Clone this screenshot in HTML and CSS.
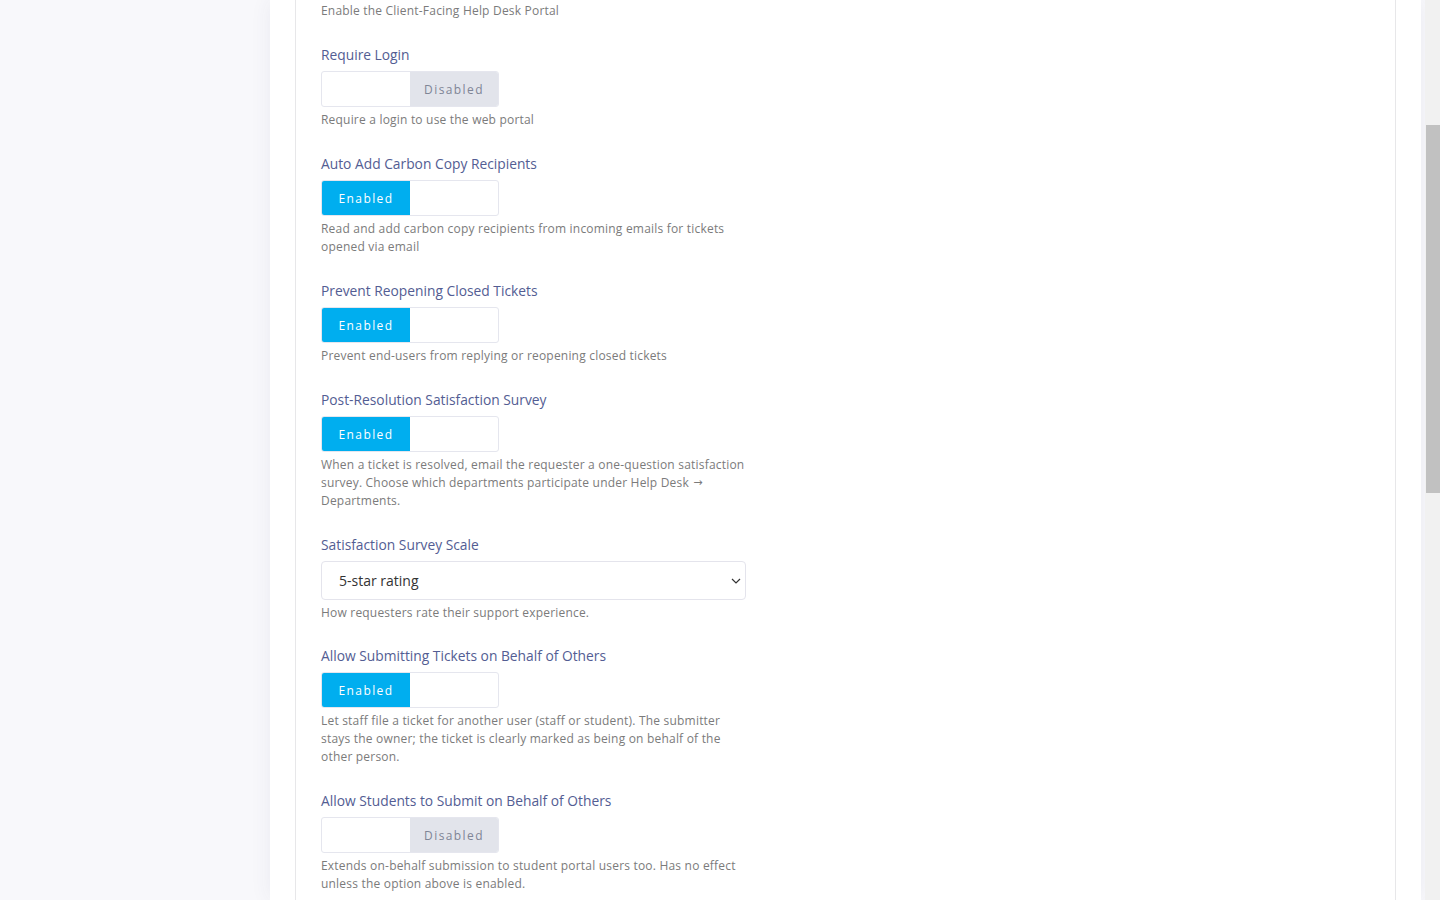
FILE: index.html
```html
<!DOCTYPE html>
<html lang="en">
<head>
<meta charset="utf-8">
<title>Help Desk Settings</title>
<link rel="stylesheet" href="styles.css">
</head>
<body>
<div class="page">
  <div class="card">
    <div class="panel">
      <div class="field">
        <div class="desc first">Enable the Client-Facing Help Desk Portal</div>
      </div>
      <div class="field">
        <div class="label">Require Login</div>
        <div class="toggle"><span class="seg"></span><span class="seg off">Disabled</span></div>
        <div class="desc">Require a login to use the web portal</div>
      </div>
      <div class="field">
        <div class="label">Auto Add Carbon Copy Recipients</div>
        <div class="toggle"><span class="seg on">Enabled</span><span class="seg"></span></div>
        <div class="desc">Read and add carbon copy recipients from incoming emails for tickets opened via email</div>
      </div>
      <div class="field">
        <div class="label">Prevent Reopening Closed Tickets</div>
        <div class="toggle"><span class="seg on">Enabled</span><span class="seg"></span></div>
        <div class="desc">Prevent end-users from replying or reopening closed tickets</div>
      </div>
      <div class="field">
        <div class="label">Post-Resolution Satisfaction Survey</div>
        <div class="toggle"><span class="seg on">Enabled</span><span class="seg"></span></div>
        <div class="desc">When a ticket is resolved, email the requester a one-question satisfaction survey. Choose which departments participate under Help Desk <span class="arrow">→</span> Departments.</div>
      </div>
      <div class="field field-select">
        <div class="label">Satisfaction Survey Scale</div>
        <div class="select-wrap">
          <select class="select">
            <option>5-star rating</option>
            <option>Thumbs up / down</option>
          </select>
          <svg class="chev" width="10" height="6" viewBox="0 0 10 6"><path d="M1 1l4 4 4-4" fill="none" stroke="#333" stroke-width="1.2"/></svg>
        </div>
        <div class="desc">How requesters rate their support experience.</div>
      </div>
      <div class="field">
        <div class="label">Allow Submitting Tickets on Behalf of Others</div>
        <div class="toggle"><span class="seg on">Enabled</span><span class="seg"></span></div>
        <div class="desc">Let staff file a ticket for another user (staff or student). The submitter stays the owner; the ticket is clearly marked as being on behalf of the other person.</div>
      </div>
      <div class="field">
        <div class="label">Allow Students to Submit on Behalf of Others</div>
        <div class="toggle"><span class="seg"></span><span class="seg off">Disabled</span></div>
        <div class="desc">Extends on-behalf submission to student portal users too. Has no effect unless the option above is enabled.</div>
      </div>
    </div>
  </div>
</div>
<div class="scrollbar"><div class="thumb"></div></div>
</body>
</html>
```
FILE: styles.css
```css
* { box-sizing: border-box; }
html, body { margin: 0; padding: 0; }
body {
  display: flex;
  height: 900px;
  overflow: hidden;
  background: #f8f8fb;
  font-family: "Open Sans", "Liberation Sans", sans-serif;
  color: #333;
}
.page {
  flex: 1;
  display: flex;
  padding: 0 4px 0 270px;
}
.card {
  flex: 1;
  display: flex;
  background: #fff;
  box-shadow: 0 0 20px rgba(60, 60, 110, 0.07);
  padding: 0 25px;
}
.panel {
  flex: 1;
  border-left: 1px solid #e7e7e9;
  border-right: 1px solid #e7e7e9;
  padding: 2px 25px 0;
}
.field {
  width: 425px;
  margin-bottom: 24px;
}
.field-select { margin-bottom: 23px; }
.label {
  font-size: 13.8px;
  line-height: 20px;
  padding-top: 1px;
  color: #535d93;
  margin-bottom: 6px;
}
.toggle {
  display: flex;
  width: 178px;
  height: 36px;
  border: 1px solid #e5e6ee;
  border-radius: 3px;
  overflow: hidden;
}
.seg {
  flex: 1;
  display: flex;
  align-items: center;
  justify-content: center;
  font-size: 12px;
  letter-spacing: 1.4px;
}
.seg.on { background: #00aeef; color: #fff; }
.seg.off { background: #e2e4eb; color: #7f8596; }
.desc {
  margin-top: 4px;
  font-size: 12px;
  letter-spacing: 0.2px;
  line-height: 18px;
  color: #7b7b7b;
}
.desc.first { margin-top: 0; }
.arrow {
  display: inline-block;
  vertical-align: top;
  height: 18px;
  line-height: 18px;
  font-family: "DejaVu Sans", sans-serif;
  font-size: 11px;
  letter-spacing: 0;
  margin-left: 1px;
}
.select-wrap { position: relative; }
.select {
  display: block;
  width: 100%;
  height: 39px;
  appearance: none;
  -webkit-appearance: none;
  border: 1px solid #e4e4ec;
  border-radius: 4px;
  background: #fff;
  padding: 0 30px 0 17px;
  font-family: inherit;
  font-size: 14px;
  color: #333;
}
.chev { position: absolute; right: 5px; top: 17px; }
.scrollbar {
  width: 15px;
  flex: none;
  background: #f1f1f1;
  padding: 125px 0 0 1px;
}
.thumb {
  height: 368px;
  background: #c1c1c1;
}
```
